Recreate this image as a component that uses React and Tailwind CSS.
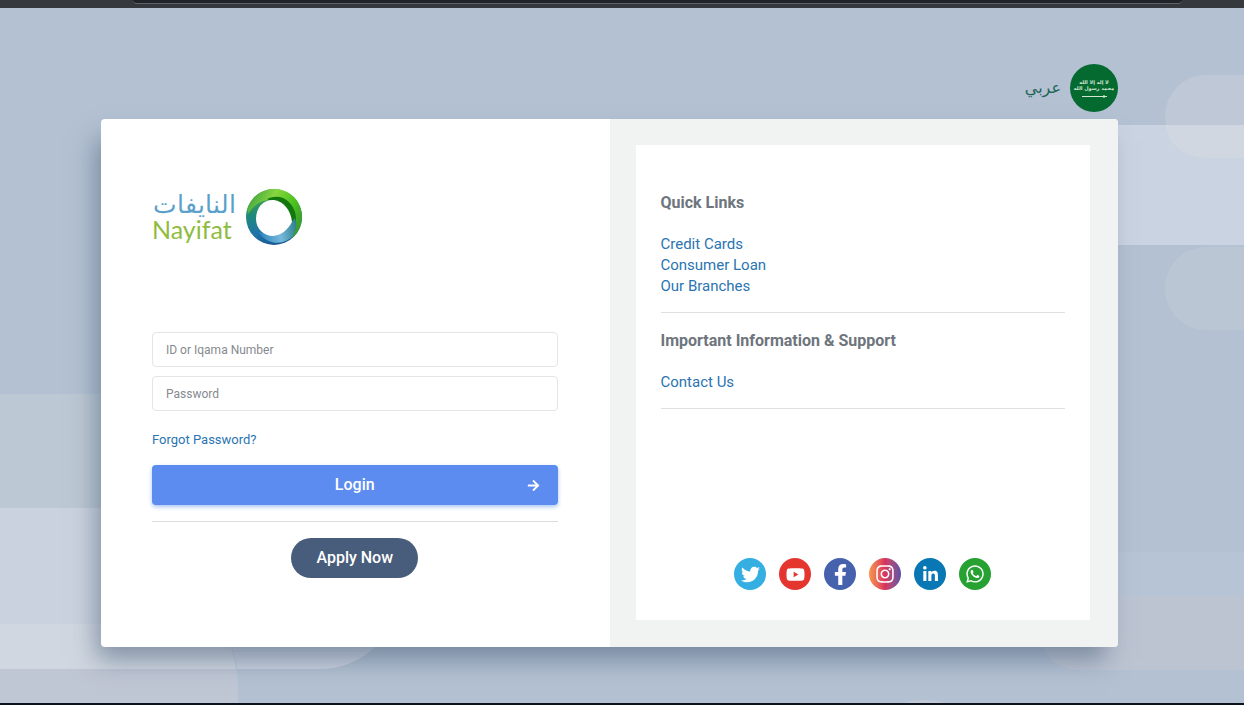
import React, { useState } from 'react';
import {
    FaArrowRight,
    FaFacebookF,
    FaInstagram,
    FaLinkedinIn,
    FaTwitter,
    FaWhatsapp,
    FaYoutube,
} from 'react-icons/fa';

const quickLinks = ['Credit Cards', 'Consumer Loan', 'Our Branches'];
const supportLinks = ['Contact Us'];

const socialLinks = [
    { name: 'Twitter', Icon: FaTwitter, bg: 'bg-[#35aee2]', size: 19 },
    { name: 'YouTube', Icon: FaYoutube, bg: 'bg-[#e5352f]', size: 19 },
    { name: 'Facebook', Icon: FaFacebookF, bg: 'bg-[#4762ac]', size: 21 },
    { name: 'Instagram', Icon: FaInstagram, bg: 'bg-linear-to-r from-[#f7964a] via-[#d9305c] to-[#5b50a8]', size: 20 },
    { name: 'LinkedIn', Icon: FaLinkedinIn, bg: 'bg-[#0a77b5]', size: 17 },
    { name: 'WhatsApp', Icon: FaWhatsapp, bg: 'bg-[#26a132]', size: 20 },
];

// Soft overlapping pills behind the card
function Backdrop() {
    return (
        <svg
            className="absolute inset-0 h-full w-full"
            viewBox="0 0 1244 705"
            preserveAspectRatio="xMidYMid slice"
            aria-hidden="true"
        >
            <rect width="1244" height="705" fill="#b3c1d2" />
            <rect x="-100" y="394" width="420" height="160" fill="#bcc8d3" />
            <rect x="-100" y="508" width="500" height="161" rx="80" fill="#cbd2df" />
            <path d="M0 624H215Q238 640 238 690V705H0Z" fill="#bfc6d4" />
            <path d="M0 624H215Q232 638 236 669H0Z" fill="#d0d7e0" />
            <rect x="1165" y="75" width="200" height="83" rx="41" fill="#bfc8d6" />
            <rect x="1000" y="125" width="260" height="120" fill="#cad3e1" />
            <path d="M1166 125H1244V158H1207C1184 158 1167 144 1166 125Z" fill="#d0d7e0" />
            <rect x="1165" y="247" width="200" height="83" rx="41" fill="#bac6d4" />
            <rect x="1000" y="552" width="260" height="60" fill="#b7c4d5" />
            <rect x="1040" y="596" width="300" height="74" rx="37" fill="#bcc4d2" />
            <ellipse cx="924" cy="710" rx="30" ry="10" fill="#c0c8d5" />
        </svg>
    );
}

function TopEdge() {
    return (
        <div className="relative h-2 overflow-hidden bg-[#35383d] pr-[62px] pl-[133px]">
            <div className="h-1 rounded-b-lg border-b border-[#5f6368] bg-[#202329]" />
        </div>
    );
}

function Flag() {
    return (
        <svg viewBox="0 0 48 48" className="h-12 w-12" aria-hidden="true">
            <circle cx="24" cy="24" r="24" fill="#046a30" />
            <g fill="#d4e5d6" fontFamily="'DejaVu Sans', sans-serif" fontSize="5" fontWeight="700" textAnchor="middle">
                <text x="24" y="20">لا إله إلا الله</text>
                <text x="24" y="26">محمد رسول الله</text>
            </g>
            <path d="M12 32.5H37M34 31v3" stroke="#d4e5d6" strokeWidth="1.2" fill="none" />
        </svg>
    );
}

function Logo() {
    return (
        <div className="flex items-center gap-[9px]">
            <div className="flex w-[84px] flex-col gap-1 whitespace-nowrap">
                <p lang="ar" dir="rtl" className="font-['DejaVu_Sans',sans-serif] text-[25px] leading-5 font-extralight text-[#5b9fcb]">
                    النايفات
                </p>
                <p className="font-['Lato',sans-serif] text-[25px] leading-5 text-[#8fbc40]">Nayifat</p>
            </div>
            <svg viewBox="0 0 58 58" className="h-[58px] w-[58px]" aria-hidden="true">
                <defs>
                    <linearGradient id="ringLeft" x1="0.3" y1="0" x2="0.5" y2="1">
                        <stop offset="0" stopColor="#4fae3a" />
                        <stop offset="0.4" stopColor="#1f8a78" />
                        <stop offset="0.75" stopColor="#1f74aa" />
                        <stop offset="1" stopColor="#185a92" />
                    </linearGradient>
                    <linearGradient id="ringTop" x1="0" y1="0.1" x2="1" y2="0.6">
                        <stop offset="0" stopColor="#3a9e42" />
                        <stop offset="0.4" stopColor="#86d63e" />
                        <stop offset="0.75" stopColor="#4cc21e" />
                        <stop offset="1" stopColor="#3a9f2c" />
                    </linearGradient>
                    <linearGradient id="ringBottom" x1="0" y1="0.4" x2="1" y2="0.3">
                        <stop offset="0" stopColor="#2f86bf" />
                        <stop offset="0.55" stopColor="#77b9de" />
                        <stop offset="1" stopColor="#2f7f8c" />
                    </linearGradient>
                </defs>
                <circle cx="29" cy="29" r="28" fill="url(#ringLeft)" />
                <path d="M3 19C8 7 18 1 29 1C45 1 57 13 57 29C57 38 53 45 47 50L40 24L26 12C16 12 9 17 3 26Q2 22 3 19Z" fill="url(#ringTop)" />
                <path d="M22 11C35 5 46 12 50 24C52 31 51 38 47 43L34 18Z" fill="#12780e" />
                <path d="M14 44C25 48 40 45 50 30C53 39 50 46 46 50C36 58 20 56 14 44Z" fill="url(#ringBottom)" />
                <path d="M11 31C11 19 19 11 29 12C38 13 46 22 47 34C42 43 36 47 28 48C19 48 11 41 11 31Z" fill="#fff" />
            </svg>
        </div>
    );
}

function LinkGroup({ title, links }) {
    return (
        <section className="mb-[17px] border-b border-[#dfe0e2] pb-[15px] text-[15px] leading-[21px]">
            <h2 className="mb-[21px] text-[16px] leading-[21px] font-bold text-[#6e757d]">{title}</h2>
            <ul>
                {links.map((link) => (
                    <li key={link}>
                        <a href="#" className="text-[#2a74b2] hover:underline">{link}</a>
                    </li>
                ))}
            </ul>
        </section>
    );
}

function LoginForm() {
    const [userId, setUserId] = useState('');
    const [password, setPassword] = useState('');

    const inputClass =
        'h-[35px] w-full rounded border border-[#e3e5e7] bg-white px-[13px] text-[12px] text-gray-700 outline-none placeholder:text-[#868a8f] focus:border-[#5c8df0]';

    return (
        <form onSubmit={(e) => e.preventDefault()} className="flex flex-col">
            <div className="flex flex-col gap-[9px]">
                <input
                    type="text"
                    aria-label="ID or Iqama Number"
                    placeholder="ID or Iqama Number"
                    value={userId}
                    onChange={(e) => setUserId(e.target.value)}
                    className={inputClass}
                />
                <input
                    type="password"
                    aria-label="Password"
                    placeholder="Password"
                    value={password}
                    onChange={(e) => setPassword(e.target.value)}
                    className={inputClass}
                />
            </div>
            <a href="#" className="mt-[19px] self-start text-[13px] leading-5 text-[#2a74b2] hover:underline">
                Forgot Password?
            </a>
            <button
                type="submit"
                className="mt-[15px] grid h-10 grid-cols-[1fr_auto_1fr] items-center rounded bg-[#5c8cf0] px-[18px] text-[16px] font-medium text-white shadow-[0_2px_4px_#a9c6f5]"
            >
                <span className="col-start-2">Login</span>
                <FaArrowRight size={13} className="justify-self-end" />
            </button>
            <hr className="my-4 border-[#dcdde0]" />
            <button
                type="button"
                className="h-10 self-center rounded-full bg-[#485d7b] px-[25px] text-[16px] font-medium text-white"
            >
                Apply Now
            </button>
        </form>
    );
}

function App() {
    return (
        <div className="relative flex min-h-screen flex-col font-['Roboto',sans-serif]">
            <Backdrop />
            <TopEdge />
            <div className="relative pt-14 pr-[126px] pb-14 pl-[101px]">
                <header className="flex justify-end">
                    <a href="#" className="flex items-center gap-[9px]">
                        <span lang="ar" dir="rtl" className="font-['DejaVu_Sans',sans-serif] text-[16px] text-[#1f6558]">عربي</span>
                        <Flag />
                    </a>
                </header>

                <main className="mt-[7px] grid grid-cols-2 overflow-hidden rounded bg-white shadow-[-8px_16px_24px_-4px_#4c607c99]">
                    <div className="pt-[69px] pr-[52px] pl-[51px]">
                        <Logo />
                        <div className="mt-[86px]">
                            <LoginForm />
                        </div>
                    </div>

                    <div className="bg-[#f1f3f3] pt-[26px] pr-7 pb-[27px] pl-[26px]">
                        <div className="flex min-h-[475px] flex-col bg-white px-[25px] pt-[47px] pb-[30px]">
                            <LinkGroup title="Quick Links" links={quickLinks} />
                            <LinkGroup title="Important Information & Support" links={supportLinks} />
                            <ul className="mt-auto flex justify-center gap-[13px]">
                                {socialLinks.map(({ name, Icon, bg, size }) => (
                                    <li key={name}>
                                        <a
                                            href="#"
                                            aria-label={name}
                                            className={`flex h-8 w-8 items-center justify-center rounded-full text-white ${bg}`}
                                        >
                                            <Icon size={size} />
                                        </a>
                                    </li>
                                ))}
                            </ul>
                        </div>
                    </div>
                </main>
            </div>
            <div className="relative mt-auto h-[2px] bg-[#0b121c]" />
        </div>
    );
}

export default App;
